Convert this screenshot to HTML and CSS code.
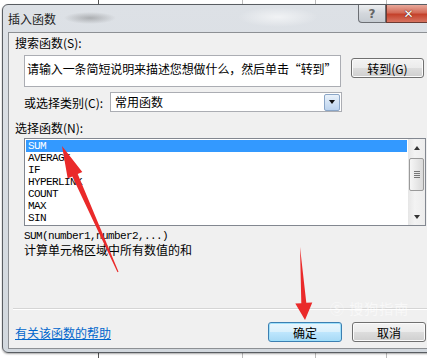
FILE: index.html
```html
<!DOCTYPE html>
<html>
	<head>
		<meta charset="UTF-8">
		<title>插入函数</title>
		<link rel="stylesheet" href="styles.css">
	</head>
	<body>
		<div class="dialog">
			<div class="titlebar">
				<span class="title">插入函数</span>
				<div class="caption">
					<span class="cap-help">?</span>
					<span class="cap-close">✕</span>
				</div>
			</div>
			<div class="client">
				<div class="label">搜索函数(S):</div>
				<div class="search-row">
					<div class="search-box">请输入一条简短说明来描述您想做什么，然后单击“转到”</div>
					<button class="btn go">转到(G)</button>
				</div>
				<div class="cat-row">
					<span class="cat-label">或选择类别(C):</span>
					<div class="select">
						<span class="select-text">常用函数</span>
						<span class="drop"></span>
					</div>
				</div>
				<div class="label pick">选择函数(N):</div>
				<div class="listbox">
					<ul class="items">
						<li class="on">SUM</li>
						<li>AVERAGE</li>
						<li>IF</li>
						<li>HYPERLINK</li>
						<li>COUNT</li>
						<li>MAX</li>
						<li>SIN</li>
					</ul>
					<div class="scrollbar">
						<span class="sb-arrow up"></span>
						<span class="sb-thumb"><i></i></span>
						<span class="sb-track"></span>
						<span class="sb-arrow down"></span>
					</div>
				</div>
				<div class="syntax">SUM(number1,number2,...)</div>
				<div class="desc">计算单元格区域中所有数值的和</div>
				<div class="sep"></div>
				<div class="footer">
					<a class="help" href="#">有关该函数的帮助</a>
					<button class="btn default">确定</button>
					<button class="btn">取消</button>
				</div>
			</div>
		</div>

		<div class="watermark">Ⓢ 搜狗指南</div>

		<svg class="arrows" width="427" height="358" viewBox="0 0 427 358">
			<polygon points="62,146 82.3,172 77.7,174 118.5,271.8 117.5,272.2 72.3,176.4 67.7,178.5" />
			<polygon points="305,320 295.3,303.6 301.3,303.2 300,247 306.3,302.8 312.3,302.4" />
		</svg>
	</body>
</html>
```

FILE: styles.css
```css
* {
	margin: 0;
	padding: 0;
	box-sizing: border-box;
}

body {
	width: 427px;
	height: 358px;
	overflow: hidden;
	position: relative;
	font-size: 12px;
	font-family: "Noto Sans CJK SC", sans-serif;
	color: #000;
	background-color: #fff;
	background-image:
		linear-gradient(#555, #555),
		linear-gradient(#bbb, #bbb),
		linear-gradient(#bbb, #bbb),
		linear-gradient(#bbb, #bbb);
	background-size: 1px 100%;
	background-repeat: no-repeat;
	background-position: 98px 0, 242px 0, 315px 0, 386px 0;
}

/* window frame */
.dialog {
	width: 448px;
	margin: 4px 0 0 2px;
	padding: 0 6px 3px 5px;
	border: 1px solid #595d62;
	border-radius: 6px;
	background: linear-gradient(#dde1e6, #d2d8de);
	box-shadow: 0 1px 2px rgba(0, 0, 0, .35);
}

.titlebar {
	display: flex;
	align-items: flex-start;
	height: 27px;
	background:
		radial-gradient(ellipse 26px 6px at 82px 13px, rgba(80, 80, 80, .35), transparent),
		radial-gradient(ellipse 40px 10px at 270px 12px, rgba(255, 255, 255, .6), transparent);
}

.title {
	line-height: 27px;
	font-size: 12px;
	color: #222;
}

.caption {
	display: flex;
	margin-left: auto;
	margin-right: 12px;
}

.cap-help,
.cap-close {
	height: 18px;
	display: flex;
	align-items: center;
	justify-content: center;
	font-family: "DejaVu Sans", sans-serif;
	font-weight: bold;
}

.cap-help {
	width: 28px;
	border: 1px solid #6c6f74;
	border-top: none;
	border-radius: 0 0 0 4px;
	background: linear-gradient(#eceef0, #d3d7dc 50%, #c6ccd2);
	color: #666;
	font-size: 12px;
}

.cap-close {
	width: 45px;
	border: 1px solid #6c3a32;
	border-top: none;
	background: linear-gradient(#e9a99b, #d36b58 45%, #c4412b 55%, #d77461);
	color: #fff;
	font-size: 12px;
	text-shadow: 0 0 1px #5a1b10, 0 0 1px #5a1b10;
}

/* client area */
.client {
	width: 435px;
	padding: 2px 16px 6px 6px;
	border: 1px solid #8d9094;
	background: #f0f0f0;
}

.label {
	line-height: 16px;
}

.search-row {
	display: flex;
	align-items: flex-start;
	margin: 4px 0 0 9px;
}

.search-box {
	width: 317px;
	height: 32px;
	padding: 5px 2px 0;
	border: 1px solid #abadb3;
	background: #fff;
	line-height: 16px;
	white-space: nowrap;
	overflow: hidden;
	letter-spacing: -0.1px;
}

.btn {
	width: 74px;
	height: 20px;
	font-size: 12px;
	font-family: "Noto Sans CJK SC", sans-serif;
	line-height: 17px;
	color: #000;
	border: 1px solid #707070;
	border-radius: 3px;
	background: linear-gradient(#f3f3f3, #ebebeb 50%, #dddddd 51%, #cfcfcf);
	box-shadow: inset 0 0 0 1px #fbfbfb;
}

.go {
	width: 73px;
	margin: 3px 0 0 10px;
}

.cat-row {
	display: flex;
	align-items: center;
	margin: 5px 0 0 9px;
}

.cat-label {
	width: 86px;
}

.select {
	display: flex;
	align-items: center;
	width: 232px;
	height: 20px;
	border: 1px solid #abadb3;
	background: #fff;
}

.select-text {
	flex: 1;
	padding-left: 4px;
	line-height: 18px;
}

.drop {
	display: flex;
	align-items: center;
	justify-content: center;
	width: 16px;
	height: 17px;
	margin-right: 1px;
	border: 1px solid #8ba6c7;
	border-radius: 2px;
	background: linear-gradient(#eaf2fb, #d2e2f4 50%, #bcd3ee);
}

.drop::before {
	content: "";
	border-left: 3px solid transparent;
	border-right: 3px solid transparent;
	border-top: 4px solid #111;
}

.pick {
	margin-top: 8px;
}

/* function list */
.listbox {
	display: flex;
	width: 402px;
	height: 88px;
	margin: 2px 0 0 9px;
	border: 1px solid #828790;
	background: #fff;
}

.items {
	flex: 1;
	list-style: none;
	padding: 1px 1px 0 1px;
	font-size: 11px;
	font-family: "Liberation Mono", monospace;
	letter-spacing: -0.6px;
}

.items li {
	height: 12px;
	line-height: 12px;
	padding-left: 2px;
}

.items .on {
	background: #3399ff;
	color: #fff;
}

.scrollbar {
	display: flex;
	flex-direction: column;
	width: 17px;
	background: linear-gradient(to right, #e6e6e6, #f3f3f3 40%, #ececec);
}

.sb-arrow {
	display: flex;
	align-items: center;
	justify-content: center;
	height: 17px;
}

.sb-arrow.up::before {
	content: "";
	border-left: 3px solid transparent;
	border-right: 3px solid transparent;
	border-bottom: 4px solid #333;
}

.sb-arrow.down::before {
	content: "";
	border-left: 3px solid transparent;
	border-right: 3px solid transparent;
	border-top: 4px solid #333;
}

.sb-thumb {
	display: flex;
	align-items: center;
	justify-content: center;
	height: 33px;
	margin: 2px 1px 0;
	border: 1px solid #9a9a9a;
	border-radius: 2px;
	background: linear-gradient(to right, #f6f6f6, #e8e8e8 50%, #dadada);
}

.sb-thumb i {
	width: 6px;
	height: 7px;
	background: repeating-linear-gradient(#777 0 1px, transparent 1px 2px);
}

.sb-track {
	flex: 1;
}

.syntax {
	margin: 3px 0 0 9px;
	line-height: 14px;
	font-size: 11px;
	font-family: "Liberation Mono", monospace;
	letter-spacing: -0.6px;
}

.desc {
	margin-left: 9px;
	line-height: 14px;
}

.sep {
	height: 2px;
	margin: 51px -16px 0 -2px;
	border-top: 1px solid #d5d5d5;
	border-bottom: 1px solid #fff;
}

.footer {
	display: flex;
	align-items: center;
	gap: 10px;
	margin-top: 12px;
}

.help {
	margin-right: auto;
	color: #0066cc;
	text-decoration: underline;
}

.default {
	border-color: #3c7fb1;
	box-shadow: inset 0 0 0 1px #9fe0fb;
	background: linear-gradient(#eaf6fd, #d9f0fc 50%, #bee6fd 51%, #a7d9f5);
}

.watermark {
	position: absolute;
	left: 330px;
	top: 298px;
	font-size: 14px;
	color: #fff;
	opacity: .55;
	letter-spacing: 1px;
}

.arrows {
	position: absolute;
	left: 0;
	top: 0;
	pointer-events: none;
}

.arrows polygon {
	fill: #ea2a2a;
}
```
